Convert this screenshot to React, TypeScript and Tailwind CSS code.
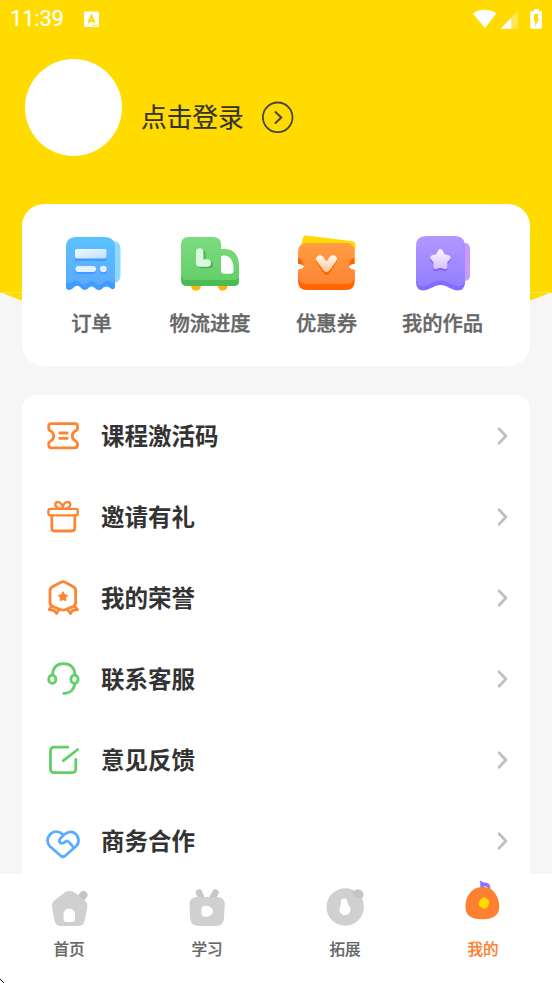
import type { ReactNode } from "react";

const CJK = "font-['Noto_Sans_CJK_SC','Noto_Sans',sans-serif]";

function StatusBar() {
  return (
    <div className="flex h-[38px] items-center justify-between pl-[9px] pr-[9px] text-white">
      <div className="flex items-center">
        <span className="w-[75px] pl-px font-['Roboto',sans-serif] text-[22px] leading-[38px] tracking-[-0.2px] [-webkit-text-stroke:0.2px_#fff]">11:39</span>
        <svg width="16" height="17" viewBox="84 10 16 17">
          <rect x="84" y="10.500" width="15" height="15.500" rx="1.200" fill="#fff" />
          <path d="M88.300 21.800 91.400 14.700 94.500 21.800M89.400 19.700h4" fill="none" stroke="#ffdb00" strokeWidth="1.900" />
          <path d="M92 24.400h1.400M94.200 24.400h1.400M96.400 24.400h1.200" stroke="#ffdb00" strokeWidth="1.100" />
        </svg>
      </div>
      <svg width="72" height="24" viewBox="471 6 72 24">
        <path d="M472.800 12.500C479.500 7.600 490 7.600 496.400 12.500L485 27Z" fill="#fff" />
        <path d="M518.200 9.500V27.700H500.800Z" fill="#fff" opacity=".33" />
        <path d="M511.200 16.800V27.700H500.800Z" fill="#fff" />
        <path d="M533.800 8h5v2H541q1 0 1 1V26.600q0 1.200-1 1.200H531.400q-1.100 0-1.100-1.200V11q0-1 1.100-1h2.400Z" fill="#fff" />
        <path d="M534.400 13h4.200l-1.200 4.600h1.900l-4.200 7.800v-5.600h-1.500Z" fill="#ffdb00" />
      </svg>
    </div>
  );
}

function OrderIcon() {
  return (
    <svg width="64" height="64" viewBox="60 230 64 64">
      <defs>
        <linearGradient id="order" x2="0" y2="1"><stop stopColor="#5ac2ff" /><stop offset="1" stopColor="#5da9ff" /></linearGradient>
        <linearGradient id="line" x1="0" y1="0" x2="1" y2="1"><stop stopColor="#f2faff" /><stop offset="1" stopColor="#bfe0ff" /></linearGradient>
      </defs>
      <rect x="104" y="241" width="16.500" height="42" rx="7" fill="#90d8ff" />
      <path d="M66 278H115V286.500C115 289.500 112.500 290 110.500 288.300 107.500 285.800 105 286 102.500 288.500 100 290.700 97.500 290.500 95 288.300 92.500 286 90.500 286 88 288.500 85.500 290.700 83 290.300 80.500 287.500 78 285 76 285.500 73.500 287.700 70 291 66 290.500 66 287Z" fill="#3e9bff" />
      <path d="M66 247Q66 237 76 237H104.500Q115 237 115 247.500V282.500C113 283.500 111.500 282 109.500 281 107 280.200 105 281 102.500 283.200 99.500 285.500 97 285 94.500 282.800 92 280.500 90 280.800 87.500 283 84.500 285.500 82 285 79.500 282.500 77 280 74.500 280.500 72 282.500 70 284 67.500 283.700 66 282.500Z" fill="url(#order)" />
      <rect x="75" y="251.500" width="31.500" height="9.500" rx="2" fill="#3e9bff" />
      <rect x="75" y="249" width="31.500" height="9.500" rx="2" fill="url(#line)" />
      <rect x="75.500" y="268" width="20.500" height="6" rx="3" fill="#3e9bff" />
      <rect x="75.500" y="266" width="20.500" height="6" rx="3" fill="#e3f2ff" />
      <circle cx="103.300" cy="271" r="3.300" fill="#3e9bff" />
      <circle cx="103.300" cy="269" r="3.300" fill="#e3f2ff" />
    </svg>
  );
}

function TruckIcon() {
  return (
    <svg width="64" height="64" viewBox="178 230 64 64">
      <defs><linearGradient id="truck" x2="0" y2="1"><stop stopColor="#7bdd80" /><stop offset="1" stopColor="#65cf68" /></linearGradient></defs>
      <circle cx="196" cy="285.800" r="5" fill="#ffb40c" />
      <circle cx="222.700" cy="285.800" r="5" fill="#ffb40c" />
      <path d="M181 272H239V281.500Q239 286 234 286H187Q181 286 181 280Z" fill="#4dbb54" />
      <path d="M181 244.500Q181 237 188.500 237H213Q221 237 221 244V249H225C234 249 239 256 239 265V276Q239 280 234 280H187Q181 280 181 274Z" fill="url(#truck)" />
      <path d="M223 255.500H224.500C229.500 255.500 233.500 261 233.500 267.500V270.500Q233.500 273.800 230 273.800H224Q221 273.800 221 270.500V257.500Q221 255.500 223 255.500Z" fill="#fff" />
      <path d="M201.800 253.800V264.500H209.200" fill="none" stroke="#46b351" strokeWidth="7.500" strokeLinecap="round" strokeLinejoin="round" />
      <path d="M199.700 252V263H207.300" fill="none" stroke="#dcf9df" strokeWidth="7.500" strokeLinecap="round" strokeLinejoin="round" />
    </svg>
  );
}

function CouponIcon() {
  return (
    <svg width="64" height="64" viewBox="294 230 64 64">
      <defs>
        <linearGradient id="coupon" x2="0" y2="1"><stop stopColor="#ff9d43" /><stop offset="1" stopColor="#ff8534" /></linearGradient>
        <linearGradient id="heart" x2="0" y2="1"><stop stopColor="#fff0e2" /><stop offset="1" stopColor="#ffd0a2" /></linearGradient>
      </defs>
      <path d="M304 235.300 351 241Q356 241.500 355.500 246L354 258 301 248 302.500 239Q303 235 307 235.300Z" fill="#ffda00" />
      <path d="M298 257.500Q304 260 304 266.500Q301 269.500 298 269.500V281Q298 290 307 290H346Q354.700 290 354.700 281V270Q351 269.500 349 267 350 259 354.700 257.500Z" fill="#ff6500" />
      <path d="M298 252Q298 243 307 243H346Q354.700 243 354.700 252V257.500Q348.500 260 349 266.500 350 269 354.700 270V275Q354.700 284 346 284H307Q298 284 298 275V270Q302.500 269 303.800 266.500 303.500 260 298 257.500Z" fill="url(#coupon)" />
      <path d="M298 257.500Q303.500 259.500 304 266.500Q301.500 264 298 264ZM354.700 257.500Q349.200 259.500 348.700 266.500 351 264 354.700 264Z" fill="#ff6500" />
      <path d="M298 264Q302 264 304 266.500 302 269.500 298 269.500ZM354.700 264Q351 264 348.700 266.500 351 269.500 354.700 269.500Z" fill="#fff" />
      <path d="M320 261 326.600 271 333 261" fill="none" stroke="#fa6900" strokeWidth="7.700" strokeLinecap="round" strokeLinejoin="round" />
      <path d="M320 259 326.600 268 333 259" fill="none" stroke="url(#heart)" strokeWidth="7.700" strokeLinecap="round" strokeLinejoin="round" />
    </svg>
  );
}

function WorksIcon() {
  return (
    <svg width="64" height="64" viewBox="411 230 64 64">
      <defs>
        <linearGradient id="works" x2="0" y2="1"><stop stopColor="#b297ff" /><stop offset="1" stopColor="#9280ff" /></linearGradient>
        <linearGradient id="star" x2="0" y2="1"><stop stopColor="#f8f2ff" /><stop offset="1" stopColor="#d8c7ff" /></linearGradient>
      </defs>
      <rect x="452" y="243" width="18" height="38" rx="5" fill="#cc9aff" />
      <path d="M416 276H465V283Q464.500 290.500 457.500 290.500C450 289.500 447 285 440.500 285S431 289.500 423.500 290.500Q416.500 290.500 416 283Z" fill="#836cff" />
      <path d="M416 246Q416 236 426 236H454.500Q465 236 465 246.500V280Q464.500 286.500 457.500 286.300C451 285 447 280.500 440.500 280.500S430 285 423.500 286.300Q416.500 286.500 416 280Z" fill="url(#works)" />
      <path d="M440.400 254 443 258.500 448 259.700 444.800 263.500 445 268.700 440.400 267 435.800 268.700 436 263.500 432.800 259.700 437.800 258.500Z" fill="#7c62f8" stroke="#7c62f8" strokeWidth="5" strokeLinejoin="round" />
      <path d="M440.400 251.700 443 256.500 448 257.700 444.800 261.500 445 266.700 440.400 265 435.800 266.700 436 261.500 432.800 257.700 437.800 256.500Z" fill="url(#star)" stroke="url(#star)" strokeWidth="5" strokeLinejoin="round" />
    </svg>
  );
}

function LineIcon({ box, color, children }: { box: string; color: string; children: ReactNode }) {
  return (
    <svg width="40" height="40" viewBox={box} fill="none" stroke={color} strokeWidth="2.800" strokeLinecap="round" strokeLinejoin="round">
      {children}
    </svg>
  );
}

const ORANGE = "#ff8533";
const GREEN = "#61d166";
const BLUE = "#58adff";

const services = [
  { label: "订单", icon: <OrderIcon />, iconShift: "", textShift: "" },
  { label: "物流进度", icon: <TruckIcon />, iconShift: "translate-x-[1px]", textShift: "translate-x-[1.5px]" },
  { label: "优惠券", icon: <CouponIcon />, iconShift: "", textShift: "translate-x-[1px]" },
  { label: "我的作品", icon: <WorksIcon />, iconShift: "", textShift: "" },
];

const rows = [
  {
    label: "课程激活码",
    icon: (
      <LineIcon box="43 416 40 40" color={ORANGE}>
        <path d="M51.500 423.700H75Q77.500 423.700 77.500 426.500V428.500Q77.500 430 76 430.600C71 433.300 71 438.700 76 441.400Q77.500 442.100 77.500 443.600V445Q77.500 447.800 75 447.800H51.500Q48.700 447.800 48.700 445V443.600Q48.700 442.100 50.200 441.400C55 438.700 55 433.300 50.200 430.600Q48.700 430 48.700 428.500V426.500Q48.700 423.700 51.500 423.700Z" />
        <path d="M59.700 433H67.300M59.700 438.300H67.300" />
      </LineIcon>
    ),
  },
  {
    label: "邀请有礼",
    icon: (
      <LineIcon box="43 497 40 40" color={ORANGE}>
        <rect x="48.400" y="508.900" width="29.400" height="6.500" rx="1.800" strokeWidth="2.400" />
        <path d="M51.800 516V528Q51.800 531 54.800 531H71.800Q74.800 531 74.800 528V516" />
        <path d="M62.900 508.500C63 501 69 501 70.200 503.500 71.200 506 68.500 508.300 66 508.500M62.900 508.500C62 501 56.500 501 55.500 503.500 54.800 506 57 508.300 59.500 508.500" strokeWidth="2.400" />
      </LineIcon>
    ),
  },
  {
    label: "我的荣誉",
    icon: (
      <LineIcon box="43 578 40 40" color={ORANGE}>
        <path d="M61 582.200Q63 581 65 582.200L73 586.400Q75.600 587.700 75.600 590.400V602.500Q75.600 605.200 73.200 606.500L65 609.800Q63 610.500 61 609.800L52.800 606.500Q50 605.200 50 602.500V590.400Q50 587.700 52.800 586.400Z" />
        <path d="M51.600 606 49.200 609.700 54.200 610.500 56.500 613.500 58.800 609.800M74.300 606 77.500 609.700 72.400 610.500 70.500 613.500 67.700 609.800" />
        <path d="M63 592.300 64.300 595 67 595.400 65.100 597.400 65.500 600.200 63 598.900 60.500 600.200 60.900 597.400 59 595.400 61.700 595Z" fill={ORANGE} strokeWidth="1.700" />
      </LineIcon>
    ),
  },
  {
    label: "联系客服",
    icon: (
      <LineIcon box="43 659 40 40" color={GREEN}>
        <rect x="48.800" y="675.200" width="7" height="8.200" rx="3.500" />
        <rect x="71" y="675.200" width="7" height="8.200" rx="3.500" />
        <path d="M52.400 675C53 667.500 57 663.700 63.500 663.700S74.500 667.500 75.100 675M74.700 684C74 690 69.500 693.500 63.800 693.500" />
      </LineIcon>
    ),
  },
  {
    label: "意见反馈",
    icon: (
      <LineIcon box="43 740 40 40" color={GREEN}>
        <path d="M67.800 747.200H54Q50.500 747.200 50.500 751V768.700Q50.500 772.600 54 772.600H72Q75.800 772.600 75.800 768.700V759.300M77.700 749.500 63.300 760.700" />
      </LineIcon>
    ),
  },
  {
    label: "商务合作",
    icon: (
      <LineIcon box="43 821 40 40" color={BLUE}>
        <path d="M63.500 834.900C58.500 830.500 53.500 831 50.500 834 46.500 838 46.800 843.500 50 846.500L61 856Q63 857.400 65 856L75.800 846.500C79.400 843.500 79.400 837.500 75.700 834 72.500 831 68 831.200 64 834.700L60.500 838.200C58.500 840.500 59.500 843.200 61.500 843.300 64 843.500 65.800 840.800 67 841 69.500 841.500 71 844.500 73.800 848" />
      </LineIcon>
    ),
  },
];

function Chevron() {
  return (
    <svg width="10" height="20" viewBox="0 0 10 20" fill="none" stroke="#bfbfbf" strokeWidth="2.800" strokeLinejoin="round" strokeLinecap="round">
      <path d="M.9 2.700 7.900 10 .9 17.300" />
    </svg>
  );
}

const tabs = [
  {
    label: "首页",
    color: "text-[#666666]",
    icon: (
      <svg width="44" height="50" viewBox="47 878 44 50">
        <path d="M81 898 83.500 895" stroke="#c5c5c5" strokeWidth="8" strokeLinecap="round" />
        <path d="M65 892.300Q69.500 889.500 74 892.300L84.500 900.300Q87.800 903 87.300 907L84.800 920Q83.800 926 78 926H61Q55.500 926 54.500 920.500L52 907Q51.300 903 55 900Z" fill="#d0d0d0" />
        <path d="M63.500 914.500C63.500 906.500 75 907 75 914.500V919Q75 922 72 922H66.500Q63.500 922 63.500 919Z" fill="#fff" />
      </svg>
    ),
  },
  {
    label: "学习",
    color: "text-[#666666]",
    icon: (
      <svg width="44" height="50" viewBox="185 878 44 50">
        <path d="M199 892.500 201 897M215.500 892.500 213 897" stroke="#c7c7c7" strokeWidth="6.500" strokeLinecap="round" />
        <path d="M197 897H217Q225 897 224.700 905L224 918Q223.500 926 216 926H199Q190.500 926 190.200 918L189.500 905Q189.500 897 197 897Z" fill="#d0d0d0" />
        <path d="M204 906C209 905 213 908 213 911.300S209 917.500 204 916.500Q201.500 916.500 201.500 914V908.500Q201.500 906.300 204 906Z" fill="#fff" />
      </svg>
    ),
  },
  {
    label: "拓展",
    color: "text-[#666666]",
    icon: (
      <svg width="44" height="50" viewBox="323 878 44 50">
        <circle cx="358" cy="894.800" r="5.500" fill="#c5c5c5" />
        <circle cx="345.200" cy="907" r="18.700" fill="#d0d0d0" />
        <path d="M352 889.700A18.700 18.700 0 0 1 361.500 898Q356 899 354 896Z" fill="#c5c5c5" />
        <circle cx="344" cy="901.700" r="3.300" fill="#fff" />
        <circle cx="345" cy="909.500" r="5.500" fill="#fff" />
        <path d="M341 902.500 340.500 907H349L347.200 901.500Z" fill="#fff" />
      </svg>
    ),
  },
  {
    label: "我的",
    color: "text-[#ff8030]",
    icon: (
      <svg width="44" height="50" viewBox="461 878 44 50">
        <path d="M480.800 888 480.300 880.800Q483 883.500 486.500 883 490.500 884 490 889L486 886 483 886.500V889Z" fill="#8c73ff" stroke="#8c73ff" strokeWidth=".6" strokeLinejoin="round" />
        <path d="M482 887C492 886.500 497.500 894 499 903.500 500.500 914 495 919.200 482.500 919.200S464.500 915 465.500 904.500C466.500 895 472 887.500 482 887Z" fill="#ff8030" />
        <path d="M482 898Q484 896.500 486 898L488.500 900.300Q490 902 488.800 904.500L487 907.500Q485.500 909.500 483 908.500L480 906.500Q478 905 479 902Z" fill="#ffdb00" />
      </svg>
    ),
  },
];

export default function App() {
  return (
    <div className={`relative flex h-[983px] w-[552px] flex-col overflow-hidden bg-[#f6f6f6] ${CJK}`}>
      <header className="h-[292px] shrink-0 bg-[#ffdb00]">
        <StatusBar />
        <div className="flex items-start pl-[25px] pt-[21px]">
          <div className="size-[97px] rounded-full bg-white" />
          <span className="ml-[19px] mt-[38px] text-[25.700px] leading-[38px] text-[#333333] [-webkit-text-stroke:0.2px_#333]">点击登录</span>
          <svg className="ml-[17px] mt-[42px]" width="33" height="33" viewBox="0 0 33 33" fill="none" stroke="#444444" strokeWidth="1.800">
            <circle cx="16.700" cy="16.300" r="14.800" />
            <path d="M14 10.500 20.200 16.500 14 22.500" strokeWidth="2" />
          </svg>
        </div>
      </header>
      <svg className="shrink-0" width="552" height="22" viewBox="0 0 552 22">
        <path d="M0 0C12 5 20 8 45 16Q276 28 507 16C532 8 540 5 552 0Z" fill="#ffdb00" />
        <path d="M0 .5H552" stroke="#ffe45a" strokeWidth="1" />
      </svg>

      <section className="relative mx-[22px] -mt-[110px] flex h-[162px] shrink-0 rounded-[22px] bg-white pl-[11px] pt-[26px]">
        {services.map((s) => (
          <div key={s.label} className="flex w-[117px] flex-col items-center">
            <div className={s.iconShift}>{s.icon}</div>
            <span className={`mt-[13px] text-[20.300px] font-medium leading-[30px] whitespace-nowrap text-[#666666] [-webkit-text-stroke:0.4px_#666] ${s.textShift}`}>{s.label}</span>
          </div>
        ))}
      </section>

      <section className="mx-[22px] mt-[29px] h-[479px] shrink-0 overflow-hidden rounded-t-[14px] bg-white">
        {rows.map((r) => (
          <div key={r.label} className="flex h-[81px] items-center pl-[21px] pr-[22px]">
            {r.icon}
            <span className="-mt-[2px] ml-[18px] flex-1 text-[23.500px] font-bold leading-[36px] text-[#333333]">{r.label}</span>
            <Chevron />
          </div>
        ))}
      </section>

      <nav className="grid h-[109px] shrink-0 grid-cols-4 bg-white">
        {tabs.map((t) => (
          <div key={t.label} className="flex flex-col items-center pt-[4px]">
            {t.icon}
            <span className={`mt-[8px] text-[15.600px] font-medium leading-[24px] [-webkit-text-stroke:0.2px_currentColor] ${t.color}`}>{t.label}</span>
          </div>
        ))}
      </nav>
      <svg className="absolute bottom-0 left-0" width="5" height="5" viewBox="0 0 5 5" shapeRendering="crispEdges">
        <path d="M0 1h1v1h-1zM1 2h1v1h-1zM2 3h1v1h-1zM3 4h1v1h-1z" fill="#111" />
      </svg>
    </div>
  );
}
